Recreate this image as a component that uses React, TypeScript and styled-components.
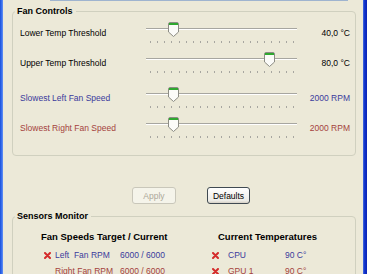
import * as React from "react";
import styled, { createGlobalStyle } from "styled-components";

const GlobalStyle = createGlobalStyle`
  html, body {
    margin: 0;
    padding: 0;
    background: #ece9d8;
  }
  body {
    font-family: "Liberation Sans", Arial, sans-serif;
    font-size: 8.5px;
    color: #000;
    overflow: hidden;
  }
`;

const Window = styled.div`
  display: flex;
  width: 367px;
  height: 274px;
  overflow: hidden;
  background: #ece9d8;
`;

const FrameLeft = styled.div`
  width: 3px;
  flex: none;
  background: linear-gradient(90deg, #1a4fd8 0%, #3c73f0 60%, #6a94f2 100%);
`;

const FrameRight = styled.div`
  width: 4px;
  flex: none;
  background: linear-gradient(90deg, #4a70e0 0%, #1134cc 40%, #0a24b4 100%);
`;

const Content = styled.div`
  flex: 1;
  display: flex;
  flex-direction: column;
`;

const TopBoxEdge = styled.div`
  height: 2px;
  margin: 0 15px 0 47px;
  background: #ffffff;
  border: 1px solid #9fb4cf;
  border-top: none;
`;

const Group = styled.fieldset<{ $top: number }>`
  margin: ${(p) => p.$top}px 7px 0 9px;
  padding: 0;
  border: 1px solid #d0d0bf;
  border-radius: 4px;
  min-width: 0;
`;

const Legend = styled.legend`
  margin-left: 2px;
  padding: 0 3px 0 2px;
  font-weight: bold;
  font-size: 9px;
  line-height: 14px;
`;

const SliderList = styled.div`
  display: flex;
  flex-direction: column;
  padding: 0 5px 12px 7px;
`;

const SliderRow = styled.div<{ $gap: number }>`
  display: grid;
  grid-template-columns: 126px 151px 1fr;
  align-items: center;
  height: 30px;
  margin-top: ${(p) => p.$gap}px;
`;

const Label = styled.div<{ $tone: string }>`
  color: ${(p) => p.$tone};
`;

const Value = styled.div<{ $tone: string }>`
  color: ${(p) => p.$tone};
  text-align: right;
`;

const SliderBox = styled.div`
  position: relative;
  height: 22px;
  display: flex;
  flex-direction: column;
`;

const Track = styled.div`
  margin-top: 6px;
  height: 0;
  border-top: 1px solid #a7a6a0;
  border-bottom: 1px solid #ffffff;
`;

const Ticks = styled.div`
  margin-top: 11px;
  display: flex;
  justify-content: space-between;
  padding: 0 3px 0 4px;
`;

const Tick = styled.span`
  width: 1px;
  height: 2px;
  background: #a7a6a0;
`;

const Thumb = styled.svg`
  position: absolute;
  top: 0;
  width: 11px;
  height: 15px;
`;

const ButtonRow = styled.div`
  display: flex;
  gap: 31px;
  padding-left: 129px;
  margin-top: 31px;
`;

const Button = styled.button<{ $disabled?: boolean }>`
  height: 17px;
  padding: 0;
  font-family: inherit;
  font-size: 8.5px;
  border-radius: 3px;
  background: ${(p) => (p.$disabled ? "#f5f4ea" : "linear-gradient(#ffffff, #ecebe6 85%, #d6d0c5)")};
  color: ${(p) => (p.$disabled ? "#aca899" : "#000")};
  border: 1px solid ${(p) => (p.$disabled ? "#c9c7ba" : "#404a52")};
  width: ${(p) => (p.$disabled ? "44px" : "43px")};
`;

const Sensors = styled.div`
  display: grid;
  grid-template-columns: 199px 1fr;
  padding-top: 7px;
`;

const Column = styled.div<{ $head: number; $rows: number }>`
  display: flex;
  flex-direction: column;
  & > h3 {
    margin: 0 0 4px ${(p) => p.$head}px;
    font-size: 9.5px;
    line-height: 13px;
  }
  & > div {
    margin-left: ${(p) => p.$rows}px;
  }
`;

const SensorRow = styled.div<{ $tone: string }>`
  display: flex;
  align-items: center;
  height: 16px;
  color: ${(p) => p.$tone};
`;

const SensorName = styled.span<{ $w: number; $pad: number }>`
  width: ${(p) => p.$w}px;
  padding-left: ${(p) => p.$pad}px;
  white-space: pre;
`;

const Spacer = styled.span`
  width: 7px;
`;

const BLUE = "#3a3a9c";
const RED = "#a4423c";

const sliders = [
  { label: "Lower Temp Threshold", value: "40,0 °C", pos: 0.16, tone: "#000", gap: 0 },
  { label: "Upper Temp Threshold", value: "80,0 °C", pos: 0.84, tone: "#000", gap: 0 },
  { label: "Slowest Left Fan Speed", value: "2000 RPM", pos: 0.16, tone: BLUE, gap: 5 },
  { label: "Slowest Right Fan Speed", value: "2000 RPM", pos: 0.16, tone: RED, gap: 0 },
];

const CrossIcon = () => (
  <svg width="7" height="7" viewBox="0 0 7 7">
    <path d="M1 1 L6 6 M6 1 L1 6" stroke="#d42b2b" strokeWidth="2" strokeLinecap="round" />
  </svg>
);

const Slider = ({ pos }: { pos: number }) => (
  <SliderBox>
    <Track />
    <Ticks>
      {Array.from({ length: 21 }, (_, i) => (
        <Tick key={i} />
      ))}
    </Ticks>
    <Thumb viewBox="0 0 11 15" style={{ left: `${Math.round(pos * 140)}px` }}>
      <path d="M0.5 2 Q0.5 0.5 2 0.5 H9 Q10.5 0.5 10.5 2 V10 L5.5 14.5 L0.5 10 Z" fill="#fbfbf8" stroke="#8c8c84" />
      <rect x="1" y="1" width="9" height="2" fill="#2fa82f" />
    </Thumb>
  </SliderBox>
);

export default function App() {
  return (
    <Window>
      <GlobalStyle />
      <FrameLeft />
      <Content>
        <TopBoxEdge />
        <Group $top={3}>
          <Legend>Fan Controls</Legend>
          <SliderList>
            {sliders.map((s) => (
              <SliderRow key={s.label} $gap={s.gap}>
                <Label $tone={s.tone}>{s.label}</Label>
                <Slider pos={s.pos} />
                <Value $tone={s.tone}>{s.value}</Value>
              </SliderRow>
            ))}
          </SliderList>
        </Group>
        <ButtonRow>
          <Button $disabled>Apply</Button>
          <Button>Defaults</Button>
        </ButtonRow>
        <Group $top={5}>
          <Legend>Sensors Monitor</Legend>
          <Sensors>
            <Column $head={28} $rows={31}>
              <h3>Fan Speeds Target / Current</h3>
              <SensorRow $tone={BLUE}>
                <CrossIcon />
                <SensorName $w={65} $pad={4}>Left  Fan RPM</SensorName>
                <span>6000 / 6000</span>
              </SensorRow>
              <SensorRow $tone={RED}>
                <Spacer />
                <SensorName $w={65} $pad={4}>Right Fan RPM</SensorName>
                <span>6000 / 6000</span>
              </SensorRow>
            </Column>
            <Column $head={6} $rows={0}>
              <h3>Current Temperatures</h3>
              <SensorRow $tone={BLUE}>
                <CrossIcon />
                <SensorName $w={57} $pad={9}>CPU</SensorName>
                <span>90 C°</span>
              </SensorRow>
              <SensorRow $tone={RED}>
                <CrossIcon />
                <SensorName $w={57} $pad={9}>GPU 1</SensorName>
                <span>90 C°</span>
              </SensorRow>
            </Column>
          </Sensors>
        </Group>
      </Content>
      <FrameRight />
    </Window>
  );
}
